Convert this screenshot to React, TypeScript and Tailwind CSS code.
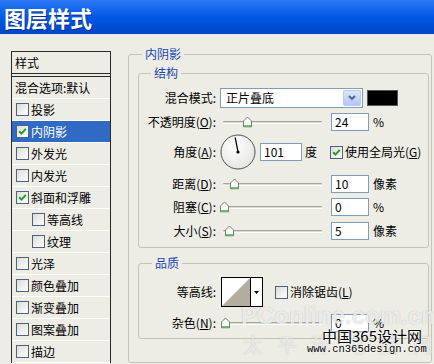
import React from "react";

const FONT = '"Noto Sans CJK SC", "Noto Sans", sans-serif';

function CheckBox({ checked }: { checked?: boolean }) {
  return (
    <span className="inline-flex w-[13px] h-[13px] shrink-0 items-center justify-center border border-[#4d6185] bg-gradient-to-br from-[#dcdcd6] to-[#ffffff]">
      {checked && (
        <svg width="9" height="9" viewBox="0 0 9 9">
          <path d="M1.2 4.2 L3.5 6.6 L7.8 1.8" stroke="#21a121" strokeWidth="2" fill="none" />
        </svg>
      )}
    </span>
  );
}

function U({ c }: { c: string }) {
  return <span className="underline underline-offset-[1px]">{c}</span>;
}

function Thumb() {
  return (
    <svg width="9" height="11" viewBox="0 0 9 11">
      <path d="M4.5 0.5 L8.5 4.5 L8.5 10.5 L0.5 10.5 L0.5 4.5 Z" fill="#fbfbf8" stroke="#7d7d78" strokeWidth="1" />
      <path d="M1 9.5 L8 9.5" stroke="#3fb34a" strokeWidth="1.5" />
    </svg>
  );
}

function Slider({ pos }: { pos: number }) {
  return (
    <div className="relative ml-[4px] w-[104px] h-full flex items-center">
      <div className="ml-[3px] w-[99px] h-[3px] border-t border-[#a4a49c] border-b border-b-white bg-[#dcdcd4] rounded-[1px]" />
      <div className="absolute top-1/2 -translate-y-1/2 flex" style={{ left: pos }}>
        <Thumb />
      </div>
    </div>
  );
}

function Input({ v, w = 38 }: { v: string; w?: number }) {
  return (
    <div
      className="h-[18px] border border-[#7f9db9] bg-white text-[12px] leading-[16px] pl-[3px] text-black"
      style={{ width: w }}
    >
      {v}
    </div>
  );
}

function Label({ children }: { children: React.ReactNode }) {
  return <div className="w-[77px] shrink-0 text-right text-[12px] leading-[14px] whitespace-nowrap">{children}</div>;
}

function SliderRow({
  label,
  pos,
  value,
  unit,
  cls,
}: {
  label: React.ReactNode;
  pos: number;
  value: string;
  unit: string;
  cls: string;
}) {
  return (
    <div className={"flex items-center h-[18px] " + cls}>
      <Label>{label}</Label>
      <Slider pos={pos} />
      <div className="ml-[7px]">
        <Input v={value} />
      </div>
      <span className="ml-[4px] text-[12px] leading-[14px]">{unit}</span>
    </div>
  );
}

const items: { t: string; cb?: boolean; c?: boolean; sel?: boolean; ind?: boolean }[] = [
  { t: "混合选项:默认" },
  { t: "投影", cb: true },
  { t: "内阴影", cb: true, c: true, sel: true },
  { t: "外发光", cb: true },
  { t: "内发光", cb: true },
  { t: "斜面和浮雕", cb: true, c: true },
  { t: "等高线", cb: true, ind: true },
  { t: "纹理", cb: true, ind: true },
  { t: "光泽", cb: true },
  { t: "颜色叠加", cb: true },
  { t: "渐变叠加", cb: true },
  { t: "图案叠加", cb: true },
  { t: "描边", cb: true },
];

export default function App() {
  return (
    <div
      className="relative w-[434px] h-[364px] overflow-hidden bg-[#edede6] text-black"
      style={{ fontFamily: FONT }}
    >
      {/* title bar */}
      <div className="h-[34px] bg-gradient-to-b from-[#2b78f2] via-[#0058e8] to-[#0046c4] flex items-center pl-[4px]">
        <span className="text-white text-[22px] font-bold leading-[34px] [text-shadow:1px_1px_0_#0a2f8a]">图层样式</span>
      </div>
      <div className="h-[1px] bg-[#dfe6f4]" />

      <div className="flex items-start pl-[11px]">
        {/* left list */}
        <div className="mt-[16px] w-[100px] border border-[#2a2a2a] border-b-0 text-[12px] leading-[14px]">
          <div className="h-[22px] flex items-center pl-[3px] border-b border-[#2a2a2a]">样式</div>
          <div className="h-[2px]" />
          <div className="border-t border-[#2a2a2a]">
            {items.map((it, i) => (
              <div
                key={i}
                className={
                  "h-[22px] flex items-center border-b border-white whitespace-nowrap " +
                  (it.sel ? "bg-[#316ac5] text-white " : "") +
                  (it.cb ? (it.ind ? "pl-[20px]" : "pl-[4px]") : "pl-[3px]")
                }
              >
                {it.cb && <CheckBox checked={it.c} />}
                <span className={it.cb ? "ml-[2px]" : ""}>{it.t}</span>
              </div>
            ))}
          </div>
        </div>

        {/* right outer group */}
        <div className="relative ml-[17px] mt-[19px] w-[304px] h-[309px] border border-[#c4c3b8] rounded-[3px] pl-[9px] pr-[2px] pt-[18px]">
          <span className="absolute -top-[8px] left-[13px] px-[3px] bg-[#edede6] text-[#1846b0] text-[12px] leading-[14px]">
            内阴影
          </span>

          {/* structure */}
          <div className="relative h-[175px] border border-[#c4c3b8] rounded-[3px] pt-[14px]">
            <span className="absolute -top-[8px] left-[12px] px-[3px] bg-[#edede6] text-[#1846b0] text-[12px] leading-[14px]">
              结构
            </span>

            <div className="flex items-center h-[20px]">
              <Label>混合模式:</Label>
              <div className="ml-[4px] w-[143px] h-[20px] border border-[#7f9db9] bg-white flex items-center justify-between">
                <span className="pl-[5px] text-[12px] leading-[14px]">正片叠底</span>
                <div className="mr-[1px] w-[18px] h-[16px] rounded-[2px] border border-[#b7c8f2] bg-gradient-to-b from-[#dbe5fc] to-[#b4c7f3] flex items-center justify-center">
                  <svg width="8" height="6" viewBox="0 0 8 6">
                    <path d="M1 1 L4 4 L7 1" stroke="#4d6185" strokeWidth="1.8" fill="none" />
                  </svg>
                </div>
              </div>
              <div className="ml-[4px] w-[31px] h-[16px] bg-black border border-[#555]" />
            </div>

            <SliderRow
              cls="mt-[5px]"
              label={<>不透明度(<U c="O" />):</>}
              pos={23}
              value="24"
              unit="%"
            />

            <div className="flex items-center h-[36px] mt-[3px]">
              <Label>角度(<U c="A" />):</Label>
              <svg className="ml-[4px] shrink-0" width="36" height="36" viewBox="0 0 36 36">
                <defs>
                  <radialGradient id="dg" cx="40%" cy="35%" r="70%">
                    <stop offset="0%" stopColor="#ffffff" />
                    <stop offset="100%" stopColor="#e4e4de" />
                  </radialGradient>
                </defs>
                <circle cx="18" cy="18" r="17" fill="url(#dg)" stroke="#4a4f5a" strokeWidth="1" />
                <line x1="18" y1="18" x2="15.2" y2="3.5" stroke="#000" strokeWidth="1.3" />
                <circle cx="18" cy="18" r="1.6" fill="#000" />
              </svg>
              <div className="ml-[4px]">
                <Input v="101" w={42} />
              </div>
              <span className="ml-[3px] text-[12px] leading-[14px]">度</span>
              <span className="ml-[13px] flex">
                <CheckBox checked />
              </span>
              <span className="ml-[2px] text-[12px] leading-[14px] whitespace-nowrap">
                使用全局光(<U c="G" />)
              </span>
            </div>

            <SliderRow cls="mt-[5px]" label={<>距离(<U c="D" />):</>} pos={10} value="10" unit="像素" />
            <SliderRow cls="mt-[5px]" label={<>阻塞(<U c="C" />):</>} pos={0} value="0" unit="%" />
            <SliderRow cls="mt-[6px]" label={<>大小(<U c="S" />):</>} pos={5} value="5" unit="像素" />
          </div>

          {/* quality */}
          <div className="relative mt-[15px] h-[76px] border border-[#c4c3b8] rounded-[3px] pt-[13px]">
            <span className="absolute -top-[8px] left-[13px] px-[3px] bg-[#edede6] text-[#1846b0] text-[12px] leading-[14px]">
              品质
            </span>
            <div className="flex items-center h-[30px]">
              <Label>等高线:</Label>
              <div className="ml-[5px] w-[42px] h-[30px] border border-black bg-white flex">
                <svg width="28" height="28" viewBox="0 0 28 28" className="shrink-0">
                  <rect width="28" height="28" fill="#ffffff" />
                  <path d="M0 28 L28 0 L28 28 Z" fill="#b3ad9f" />
                </svg>
                <div className="w-[12px] h-[28px] border-l border-black flex items-center justify-center">
                  <svg width="5" height="3" viewBox="0 0 5 3">
                    <path d="M0 0 L5 0 L2.5 3 Z" fill="#000" />
                  </svg>
                </div>
              </div>
              <span className="ml-[12px] flex">
                <CheckBox />
              </span>
              <span className="ml-[2px] text-[12px] leading-[14px] whitespace-nowrap">
                消除锯齿(<U c="L" />)
              </span>
            </div>
            <SliderRow cls="mt-[7px]" label={<>杂色(<U c="N" />):</>} pos={1} value="0" unit="%" />
          </div>
        </div>
      </div>

      {/* watermarks */}
      <div
        className="absolute left-[241px] top-[302px] text-[24px] font-bold leading-[28px] text-white/75 whitespace-nowrap [text-shadow:0_0_1px_rgba(90,90,90,0.45)]"
        style={{ fontFamily: '"Liberation Sans", Arial, sans-serif' }}
      >
        PConline.com.cn
      </div>
      <div className="absolute left-[243px] top-[334px] text-[20px] leading-[22px] text-white/70 tracking-[14px] whitespace-nowrap [text-shadow:0_0_1px_rgba(90,90,90,0.4)]">
        太平洋电脑网
      </div>
      <div className="absolute left-[322px] top-[327px] text-[15px] leading-[18px] text-black whitespace-nowrap [text-shadow:0_0_2px_#fff,0_0_2px_#fff]">
        中国365设计网
      </div>
      <div
        className="absolute left-[307px] top-[343px] text-[10.5px] leading-[12px] text-black whitespace-nowrap [text-shadow:0_0_2px_#fff,0_0_2px_#fff]"
        style={{ fontFamily: '"Liberation Mono", monospace' }}
      >
        www.cn365design.com
      </div>
    </div>
  );
}
